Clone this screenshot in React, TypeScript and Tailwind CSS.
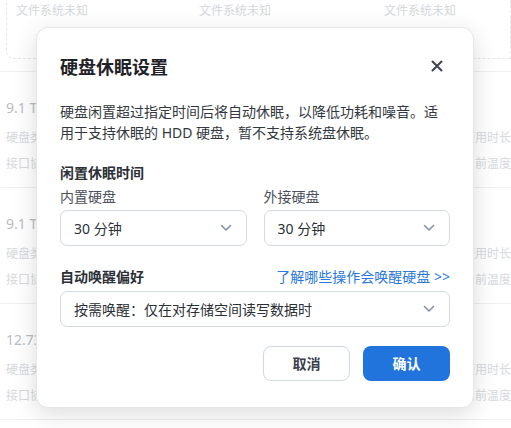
import React from "react";

const font = { fontFamily: '"Noto Sans", "Noto Sans CJK SC", sans-serif' };

function Chevron() {
  return (
    <svg width="12" height="8" viewBox="0 0 12 8" fill="none">
      <path d="M1.5 1.5L6 6L10.5 1.5" stroke="#8792a4" strokeWidth="1.6" strokeLinecap="round" strokeLinejoin="round" />
    </svg>
  );
}

function Select({ value }: { value: string }) {
  return (
    <div className="flex h-[36px] items-center justify-between rounded-[7px] border border-[#d3dae4] bg-white pl-[13px] pr-[14px]">
      <span className="text-[14px] text-[#2b2f36]">{value}</span>
      <Chevron />
    </div>
  );
}

function Row({ cap }: { cap: string }) {
  return (
    <div className="relative flex h-[116px] flex-col border-b border-[#eef0f3] pl-[6px]">
      <div className="mt-[26px] h-[20px] text-[14px] leading-[20px] text-[#b9bdc4]">{cap}</div>
      <div className="mt-[11px] flex h-[18px] justify-between text-[12px] leading-[18px] text-[#d6d9de]">
        <span>硬盘类型</span>
        <span className="whitespace-nowrap">使用时长</span>
      </div>
      <div className="mt-[8px] flex h-[18px] justify-between text-[12px] leading-[18px] text-[#d6d9de]">
        <span>接口协议</span>
        <span className="whitespace-nowrap">当前温度</span>
      </div>
    </div>
  );
}

export default function App() {
  return (
    <div className="relative h-[428px] w-[511px] overflow-hidden bg-white" style={font}>
      {/* background page */}
      <div className="flex flex-col">
        <div className="h-[72px] border-b border-[#eef0f3]">
          <div className="ml-[6px] mt-[-20px] h-[79px] rounded-bl-[8px] border border-dashed border-[#e6e8ec] pt-[21px]">
            <div className="flex pl-[9px] text-[12px] leading-[18px] text-[#d4d7dc]">
              <span className="w-[183px]">文件系统未知</span>
              <span className="w-[185px]">文件系统未知</span>
              <span>文件系统未知</span>
            </div>
          </div>
        </div>
        <Row cap="9.1 TB" />
        <Row cap="9.1 TB" />
        <Row cap="12.73 TB" />
      </div>

      {/* dialog */}
      <div className="absolute left-[36px] top-[27px] flex h-[381px] w-[438px] flex-col rounded-[12px] border border-[#e4e6ea] bg-white px-[23px] pt-[26px] shadow-[0_6px_24px_rgba(0,0,0,0.14)]">
        <div className="flex h-[26px] items-center justify-between">
          <h2 className="text-[18px] font-bold leading-[26px] text-[#1f2329]">硬盘休眠设置</h2>
          <svg width="12" height="12" viewBox="0 0 12 12" className="mr-[7px] mt-[-3px]">
            <path d="M1.5 1.5L10.5 10.5M10.5 1.5L1.5 10.5" stroke="#3c4350" strokeWidth="2" strokeLinecap="round" />
          </svg>
        </div>
        <p className="mt-[21px] text-[14px] leading-[21px] text-[#333840]">
          硬盘闲置超过指定时间后将自动休眠，以降低功耗和噪音。适
          <br />
          用于支持休眠的 HDD 硬盘，暂不支持系统盘休眠。
        </p>
        <div className="mt-[20px] text-[14px] font-bold leading-[20px] text-[#2b2f36]">闲置休眠时间</div>
        <div className="mt-[4px] grid grid-cols-2 gap-[17px]">
          <div className="flex flex-col gap-[3px]">
            <span className="text-[14px] leading-[20px] text-[#4a515c]">内置硬盘</span>
            <Select value="30 分钟" />
          </div>
          <div className="flex flex-col gap-[3px]">
            <span className="text-[14px] leading-[20px] text-[#4a515c]">外接硬盘</span>
            <Select value="30 分钟" />
          </div>
        </div>
        <div className="mt-[21px] flex h-[20px] items-center justify-between">
          <span className="text-[14px] font-bold leading-[20px] text-[#2b2f36]">自动唤醒偏好</span>
          <span className="text-[14px] leading-[20px] text-[#2a78de]">了解哪些操作会唤醒硬盘 &gt;&gt;</span>
        </div>
        <div className="mt-[4px]">
          <Select value="按需唤醒：仅在对存储空间读写数据时" />
        </div>
        <div className="mt-[19px] flex justify-end gap-[13px]">
          <button className="h-[35px] w-[87px] rounded-[8px] border border-[#cfd8e3] bg-white text-[14px] font-bold text-[#3a414c]">
            取消
          </button>
          <button className="h-[35px] w-[87px] rounded-[8px] bg-[#2174dc] text-[14px] font-bold text-white">
            确认
          </button>
        </div>
      </div>
    </div>
  );
}
